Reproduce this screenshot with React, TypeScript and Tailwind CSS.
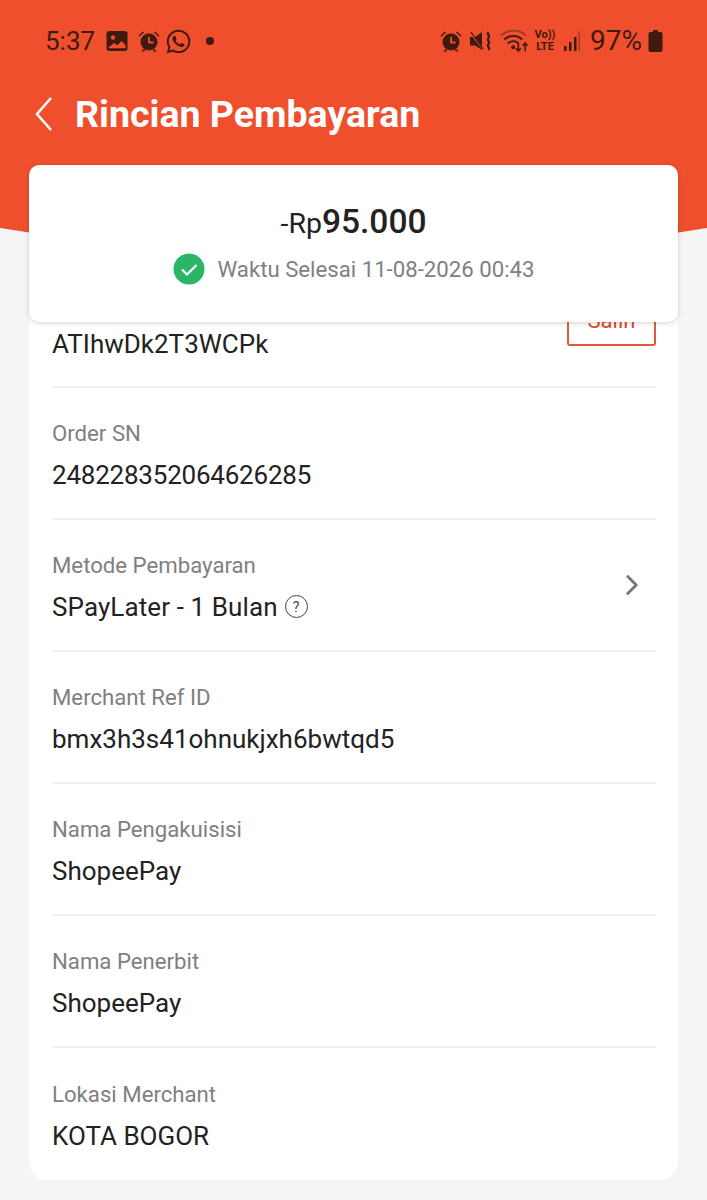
import { ChevronRight } from 'lucide-react';
import { FaWhatsapp } from 'react-icons/fa';

const rows = [
  { label: 'Order SN', value: '248228352064626285', tight: true },
  { label: 'Metode Pembayaran', value: 'SPayLater - 1 Bulan', help: true, chevron: true },
  { label: 'Merchant Ref ID', value: 'bmx3h3s41ohnukjxh6bwtqd5' },
  { label: 'Nama Pengakuisisi', value: 'ShopeePay' },
  { label: 'Nama Penerbit', value: 'ShopeePay' },
  { label: 'Lokasi Merchant', value: 'KOTA BOGOR' },
];

function AlarmIcon() {
  return (
    <svg width="24" height="24" viewBox="0 0 24 24" fill="#3f1a10">
      <circle cx="12" cy="13" r="8.500" />
      <path d="M6.500 20l-2 2.500h2.500l1.500-1.500zM17.500 20l2 2.500H17l-1.500-1.500z" />
      <path d="M1.500 6.500L6 2.500l1 1-4.500 4zM22.500 6.500L18 2.500l-1 1 4.500 4z" />
      <path d="M12 8v5.500h4.500" fill="none" stroke="#f04f2d" strokeWidth="1.800" />
    </svg>
  );
}

function ImageIcon() {
  return (
    <svg width="22" height="22" viewBox="0 0 22 22">
      <rect x="0.500" y="1" width="21" height="20" rx="3" fill="#3f1a10" />
      <circle cx="7" cy="7.500" r="2.200" fill="#f04f2d" />
      <path d="M2.500 17.500l5.500-4.500 3.500 2.500 4-4.500 4 4v2.500q0 .8-.8.800H3.300q-.8 0-.8-.8z" fill="#f04f2d" />
    </svg>
  );
}

function StatusRight() {
  return (
    <div className="flex items-center text-[#3f1a10]">
      <AlarmIcon />
      <svg className="ml-[7px]" width="22" height="24" viewBox="0 0 22 24" fill="#3f1a10">
        <path d="M0 8h5l7-5v18l-7-4.500H0z" />
        <path d="M0.500 3.500l13 17.500" stroke="#f04f2d" strokeWidth="1.800" />
        <path d="M1 3l12 17" stroke="#3f1a10" strokeWidth="1.300" />
        <path d="M18.500 3c-2.500 2.500 2.500 3.500 0 6s2.500 3.500 0 6 2.500 3.500 0 6" fill="none" stroke="#3f1a10" strokeWidth="2.200" />
      </svg>
      <svg className="ml-[8px]" width="29" height="26" viewBox="0 0 30 26" fill="none">
        <path d="M1 7.500C8 .5 20 .5 27 7.500" stroke="#9c3a22" strokeWidth="2" />
        <path d="M4.500 11.500C10 6.500 18 6.500 23 11.500M8 15.500c3.500-3 8-3 11 0" stroke="#3f1a10" strokeWidth="2" />
        <circle cx="13.500" cy="19.500" r="2" fill="#3f1a10" />
        <path d="M19 15v8m-2.500-2.500L19 23.500l2.500-3M26 23.500v-8m-2.500 2.500L26 15l2.500 3" stroke="#3f1a10" strokeWidth="1.600" />
      </svg>
      <div className="ml-[6px] flex w-[20px] flex-col items-center text-[11px] font-bold leading-[12px]">
        <span>Vo))</span>
        <span>LTE</span>
      </div>
      <svg className="ml-[8px]" width="18" height="22" viewBox="0 0 18 22" fill="#3f1a10">
        <rect x="1" y="16" width="2.500" height="5" />
        <rect x="6" y="12" width="2.500" height="9" />
        <rect x="11" y="7" width="2.500" height="14" />
        <rect x="15.500" y="1" width="1.500" height="20" fill="#a33c23" />
      </svg>
      <span className="ml-[9px] text-[28px] leading-[30px]">97%</span>
      <svg className="ml-[6px]" width="15" height="22" viewBox="0 0 14 22" fill="#3f1a10">
        <path d="M4.500 0h5v2H12q2 0 2 2v16q0 2-2 2H2q-2 0-2-2V4q0-2 2-2h2.500z" />
      </svg>
    </div>
  );
}

function Header() {
  return (
    <div className="relative h-[228px] bg-[#f04f2d]">
      <div className="flex h-[82px] items-center justify-between pl-[45px] pr-[44px] text-[#3f1a10]">
        <div className="flex items-center">
          <span className="text-[26px] leading-[30px]">5:37</span>
          <span className="ml-[11px]"><ImageIcon /></span>
          <span className="ml-[9px]"><AlarmIcon /></span>
          <FaWhatsapp className="ml-[4px]" size={27} />
          <span className="ml-[14px] h-[8px] w-[8px] rounded-full bg-[#3f1a10]" />
        </div>
        <StatusRight />
      </div>
      <div className="flex h-[64px] items-center pl-[34px]">
        <svg width="20" height="36" viewBox="0 0 20 36" fill="none">
          <path d="M17 2L3 18l14 16" stroke="#ffffff" strokeWidth="2.500" />
        </svg>
        <h1 className="ml-[21px] text-[37.500px] font-bold leading-[40px] text-white">Rincian Pembayaran</h1>
      </div>
      <svg className="absolute left-0 top-full" width="707" height="30" viewBox="0 0 707 30">
        <path d="M0 0H707Q353.500 60 0 0z" fill="#f04f2d" />
      </svg>
    </div>
  );
}

function Summary() {
  return (
    <div className="relative z-10 mx-[29px] -mt-[63px] flex h-[157px] flex-col items-center rounded-[10px] bg-white pt-[36px] shadow-[0_1px_5px_rgba(0,0,0,0.18)]">
      <div className="flex items-baseline leading-[42px] text-[#222222]">
        <span className="text-[28.500px]">-Rp</span>
        <span className="text-[33.500px] font-medium">95.000</span>
      </div>
      <div className="mt-[8px] flex items-center">
        <svg width="32" height="32" viewBox="0 0 32 32" fill="none">
          <circle cx="16" cy="16" r="15.500" fill="#2bb566" />
          <path d="M9 16.500l5 5 9.500-9.500" stroke="#ffffff" strokeWidth="2.200" />
        </svg>
        <span className="ml-[13px] text-[22.200px] leading-[32px] text-[#808080]">Waktu Selesai 11-08-2026 00:43</span>
      </div>
    </div>
  );
}

export default function App() {
  return (
    <div className="h-[1200px] w-[707px] overflow-hidden bg-[#f5f5f5] font-['Roboto',sans-serif]">
      <Header />
      <Summary />
      <div className="relative mx-[29px] -mt-[66px] h-[924px] rounded-[18px] bg-white pl-[23px] pr-[22px]">
        <div className="flex h-[132px] items-end justify-between border-b-2 border-[#f0f0f0]">
          <div className="pb-[25px]">
            <div className="text-[26px] leading-[34px] text-[#222222]">ATIhwDk2T3WCPk</div>
          </div>
          <button className="mb-[40px] h-[50px] w-[89px] rounded-[3px] border-2 border-[#e0593d] text-[22px] leading-[28px] text-[#e0492a]">
            Salin
          </button>
        </div>
        {rows.map((row, i) => (
          <div
            key={row.label}
            className={`flex h-[132px] items-center justify-between ${i < rows.length - 1 ? 'border-b-2 border-[#f0f0f0]' : ''}`}
          >
            <div className="pt-[3px]">
              <div className="text-[22.200px] leading-[30px] text-[#808080]">{row.label}</div>
              <div
                className={`mt-[10px] flex items-center text-[26px] leading-[34px] text-[#222222] ${row.tight ? 'tracking-[-0.22px]' : ''} ${row.help ? 'tracking-[0.1px]' : ''}`}
              >
                {row.value}
                {row.help && (
                  <span className="ml-[7px] flex h-[23px] w-[23px] items-center justify-center rounded-full border-[1.5px] border-[#444444] text-[14px] leading-none text-[#444444]">
                    ?
                  </span>
                )}
              </div>
            </div>
            {row.chevron && <ChevronRight className="mr-[7px] text-[#777777]" size={34} strokeWidth={2} />}
          </div>
        ))}
      </div>
    </div>
  );
}
